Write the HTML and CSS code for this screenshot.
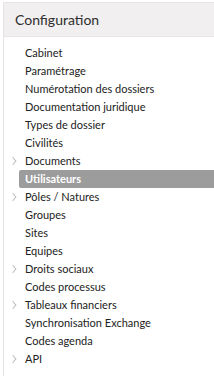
FILE: index.html
```html
<!DOCTYPE html>
<html>
<head>
<meta charset="utf-8">
<link rel="stylesheet" href="styles.css">
</head>
<body>
<div class="panel">
  <div class="header">Configuration</div>
  <ul class="menu">
    <li class="item">Cabinet</li>
    <li class="item">Paramétrage</li>
    <li class="item">Numérotation des dossiers</li>
    <li class="item">Documentation juridique</li>
    <li class="item">Types de dossier</li>
    <li class="item">Civilités</li>
    <li class="item has-sub">Documents</li>
    <li class="item active">Utilisateurs</li>
    <li class="item has-sub">Pôles / Natures</li>
    <li class="item">Groupes</li>
    <li class="item">Sites</li>
    <li class="item">Equipes</li>
    <li class="item has-sub">Droits sociaux</li>
    <li class="item">Codes processus</li>
    <li class="item has-sub">Tableaux financiers</li>
    <li class="item">Synchronisation Exchange</li>
    <li class="item">Codes agenda</li>
    <li class="item has-sub">API</li>
  </ul>
</div>
</body>
</html>
```
FILE: styles.css
```css
html, body {
  margin: 0;
  padding: 0;
  background: #fff;
}
body {
  font-family: Lato, "Liberation Sans", sans-serif;
  color: #222;
}
.panel {
  margin: 2px 0 0 3px;
  border-left: 1px solid #e6e4e4;
  border-top: 1px solid #e6e4e4;
  height: 374px;
  box-sizing: border-box;
}
.header {
  background: #f1efef;
  height: 33px;
  display: flex;
  align-items: center;
  padding-left: 11px;
  font-size: 14px;
  color: #2e2e2e;
  border-bottom: 1px solid #e8e6e6;
}
.menu {
  list-style: none;
  margin: 0;
  padding: 7px 0 0 15px;
}
.item {
  position: relative;
  height: 18px;
  line-height: 18px;
  font-size: 11px;
  padding-left: 6px;
  border-radius: 2px 0 0 2px;
}
.item.has-sub::before {
  content: "";
  position: absolute;
  left: -9px;
  top: 6px;
  width: 5px;
  height: 5px;
  border-top: 1px solid #b8b8b8;
  border-right: 1px solid #b8b8b8;
  transform: scaleX(0.8) rotate(45deg);
}
.item.active {
  background: #9c9c9c;
  color: #fff;
  font-weight: bold;
}
```
